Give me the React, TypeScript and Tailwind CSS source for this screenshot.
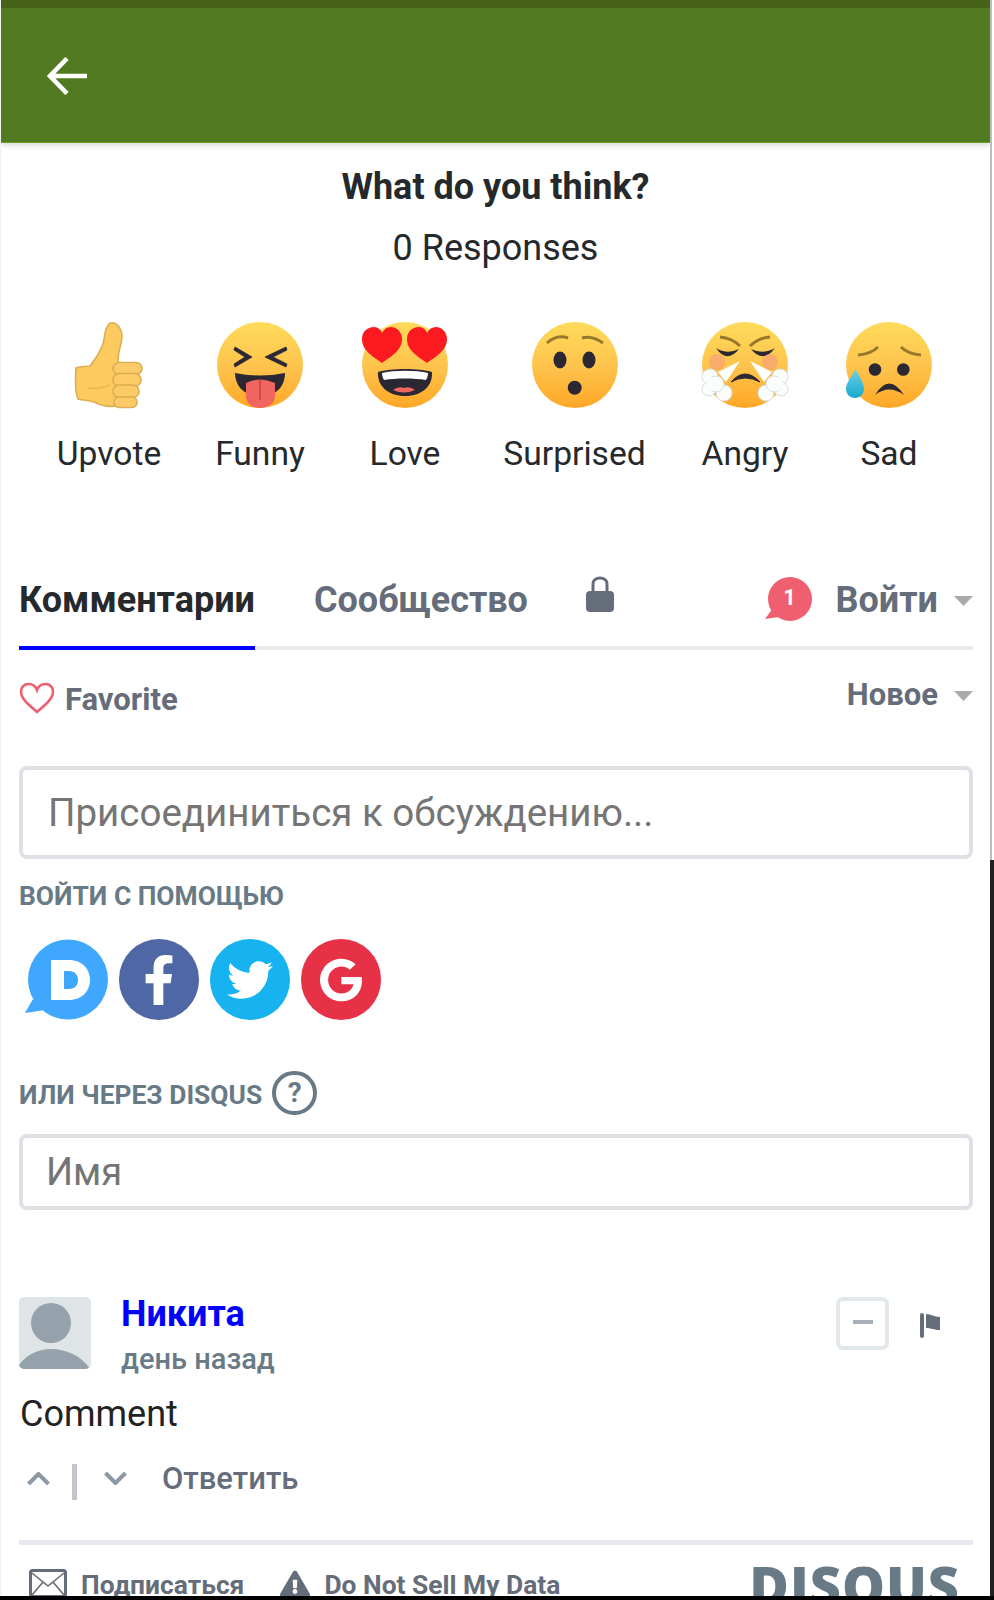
import React from "react";
import { FaFacebookF, FaTwitter, FaGoogle, FaExclamationTriangle } from "react-icons/fa";

const Defs = () => (
  <svg width="0" height="0" className="absolute">
    <defs>
      <linearGradient id="face" x1="0" y1="0" x2="0" y2="1">
        <stop offset="0" stopColor="#ffdb5a" />
        <stop offset="0.55" stopColor="#fec24b" />
        <stop offset="1" stopColor="#ffa726" />
      </linearGradient>
      <linearGradient id="tear" x1="0" y1="0" x2="0" y2="1">
        <stop offset="0" stopColor="#6fd0ea" />
        <stop offset="1" stopColor="#16a8cd" />
      </linearGradient>
    </defs>
  </svg>
);

const Face = ({ children }: { children?: React.ReactNode }) => (
  <svg width="86" height="86" viewBox="0 0 86 86" className="overflow-visible block">
    <circle cx="43" cy="43" r="43" fill="url(#face)" />
    {children}
  </svg>
);

const Thumb = () => (
  <svg width="86" height="86" viewBox="0 0 86 86" className="overflow-visible block">
    <path
      d="M46 0.8C52 0.8 56 8 56 14C56 22 52 28 52 39L50 84C44 85 36 84 28 80C22 78 15 78 12 77C9 70 9 60 10 46C14 44 20 45 24 44C30 36 36 28 38 18C39 8 41 0.8 46 0.8Z"
      fill="#fdca60"
      stroke="#dcae53"
      strokeWidth="1.6"
    />
    <path d="M22 66C30 67 36 66 44 63" fill="none" stroke="#dcae53" strokeWidth="1" />
    <rect x="47" y="40.5" width="29" height="12" rx="6" fill="#fccb68" stroke="#dcae53" strokeWidth="1.6" />
    <rect x="47" y="51.5" width="28" height="12.5" rx="6" fill="#fccb68" stroke="#dcae53" strokeWidth="1.6" />
    <rect x="47" y="63" width="26" height="12.5" rx="6" fill="#fccb68" stroke="#dcae53" strokeWidth="1.6" />
    <rect x="48" y="75" width="23" height="10.5" rx="5" fill="#fccb68" stroke="#dcae53" strokeWidth="1.6" />
  </svg>
);

const Funny = () => (
  <Face>
    <path d="M18 25L35 35L18 45L17 42L28 35L17 28Z" fill="#2b2733" stroke="#2b2733" strokeWidth="0.8" />
    <path d="M69 25L48 35L69 45L70 42L56 35L70 28Z" fill="#2b2733" stroke="#2b2733" strokeWidth="0.8" />
    <path d="M18 51Q43 56 68 51C68 64 60 74 43 74C27 74 18 64 18 51Z" fill="#2b2733" />
    <path d="M29 61Q43 54 58 61L58 74C58 82 50 86 43 86C36 86 29 82 29 74Z" fill="#f0655f" />
    <path d="M43 58V78" stroke="#c5433f" strokeWidth="1.5" />
  </Face>
);

const Heart = ({ x }: { x: number }) => (
  <path
    transform={`translate(${x} 5)`}
    d="M20 36C12 30 0 24 0 12C0 4 6 0 12 0C16 0 19 3 20 6C22 2 25 0 29 0C35 0 40 5 40 12C40 24 28 30 20 36Z"
    fill="#fb1a1f"
  />
);

const Love = () => (
  <Face>
    <path d="M16 50C28 46 58 46 70 50C71 64 60 74 43 74C26 74 15 64 16 50Z" fill="#2b2733" />
    <path d="M20 51C32 48 54 48 66 51C66 54 65 56 64 58C52 56 34 56 22 58C21 56 20 54 20 51Z" fill="#ffffff" />
    <path d="M31 68Q36 64 42 66Q48 64 53 68Q42 73 31 68Z" fill="#f0695f" />
    <Heart x={0} />
    <Heart x={45} />
  </Face>
);

const Surprised = () => (
  <Face>
    <path d="M15 21Q25 12 36 16" fill="none" stroke="#98782a" strokeWidth="3" />
    <path d="M50 16Q60 13 71 21" fill="none" stroke="#98782a" strokeWidth="3" />
    <ellipse cx="28" cy="38" rx="6.5" ry="8.5" fill="#2b2733" />
    <ellipse cx="57" cy="38" rx="6.5" ry="8.5" fill="#2b2733" />
    <circle cx="42.7" cy="65.7" r="7" fill="#2b2733" />
  </Face>
);

const Angry = () => (
  <Face>
    <path d="M18 15Q30 16 38 24" fill="none" stroke="#98782a" strokeWidth="3" />
    <path d="M68 15Q56 16 48 24" fill="none" stroke="#98782a" strokeWidth="3" />
    <path d="M14 26Q25 33 37 27Q25 42 14 26Z" fill="#2b2733" />
    <path d="M49 27Q61 33 73 26Q61 42 49 27Z" fill="#2b2733" />
    <circle cx="15" cy="40" r="8" fill="#f59a80" opacity="0.6" />
    <circle cx="68" cy="40" r="8" fill="#f59a80" opacity="0.6" />
    <path d="M38 39L16 50L24 60Z" fill="#ffffff" />
    <path d="M48 39L70 50L62 60Z" fill="#ffffff" />
    <path d="M29 60Q43 44 58 60Q43 52 29 60Z" fill="#2b2733" stroke="#2b2733" strokeWidth="1" />
    {[
      [8, 55, 8],
      [7, 67, 7],
      [22, 71, 8],
      [14, 62, 8],
      [78, 55, 8],
      [79, 67, 7],
      [64, 71, 8],
      [72, 62, 8],
    ].map(([cx, cy, r], i) => (
      <circle key={i} cx={cx} cy={cy} r={r} fill="#fbfdfd" stroke="#d4dfe2" strokeWidth="1" />
    ))}
    <circle cx="12" cy="62" r="7" fill="#fbfdfd" />
    <circle cx="74" cy="62" r="7" fill="#fbfdfd" />
  </Face>
);

const Sad = () => (
  <Face>
    <path d="M12 33Q25 32 32 25" fill="none" stroke="#98782a" strokeWidth="3" />
    <path d="M55 25Q62 32 75 33" fill="none" stroke="#98782a" strokeWidth="3" />
    <circle cx="29" cy="47.5" r="6.3" fill="#2b2733" />
    <circle cx="57.3" cy="47.5" r="6.3" fill="#2b2733" />
    <path d="M29 73Q43 50 58 73Q43 62 29 73Z" fill="#2b2733" />
    <path d="M9.5 47C12 53 18 60 18 67C18 72 14 76 9 76C4 76 0 72 0 67C0 60 7 53 9.5 47Z" fill="url(#tear)" />
  </Face>
);

const reactions: { label: string; icon: React.ReactNode; w: string }[] = [
  { label: "Upvote", icon: <Thumb />, w: "w-[180px]" },
  { label: "Funny", icon: <Funny />, w: "w-[122px]" },
  { label: "Love", icon: <Love />, w: "w-[168px]" },
  { label: "Surprised", icon: <Surprised />, w: "w-[171px]" },
  { label: "Angry", icon: <Angry />, w: "w-[170px]" },
  { label: "Sad", icon: <Sad />, w: "w-[118px]" },
];

const Caret = () => (
  <svg width="19" height="10" viewBox="0 0 19 10" className="block">
    <path d="M0 0H19L9.5 10Z" fill="#aaaaaa" />
  </svg>
);

export default function App() {
  return (
    <div className="relative w-[994px] h-[1600px] overflow-hidden bg-white font-[Roboto,sans-serif]">
      <Defs />
      <div className="w-[990px] h-[1600px] overflow-hidden border-l border-[#f2f2f2]">
        {/* app bar */}
        <div className="h-[143px] bg-[#527a20] border-b border-[#6aa025] shadow-[0_2px_6px_rgba(0,0,0,0.18)]">
          <div className="h-[8px] bg-[#466219]" />
          <div className="pl-[46px] pt-[49px]">
            <svg width="40" height="38" viewBox="0 0 40 38" className="block">
              <path d="M40 19H4M20 1.5L3 19L20 36.5" fill="none" stroke="#ffffff" strokeWidth="4.6" />
            </svg>
          </div>
        </div>

        {/* reactions */}
        <div className="mt-[24px] h-[40px] leading-[40px] text-center text-[36px] font-bold text-[#25292c]">
          What do you think?
        </div>
        <div className="mt-[21px] h-[40px] leading-[40px] text-center text-[36px] text-[#25292c]">
          0 Responses
        </div>
        <div className="mt-[54px] pl-[18px] flex">
          {reactions.map((r) => (
            <div key={r.label} className={`flex flex-col items-center shrink-0 ${r.w}`}>
              {r.icon}
              <div className="mt-[26px] h-[40px] leading-[40px] text-[33.6px] text-[#25292c] whitespace-nowrap">
                {r.label}
              </div>
            </div>
          ))}
        </div>

        <div className="pl-[18px] pr-[17px]">
          {/* tabs */}
          <div className="mt-[100px] h-[76px] flex items-start border-b-4 border-[#e7e9ee]">
            <div className="h-[76px] border-b-4 border-[#0000ff] leading-[52px] text-[36px] font-bold text-[#25292c] whitespace-nowrap">
              Комментарии
            </div>
            <div className="ml-[59px] leading-[52px] text-[36px] font-bold text-[#656c7a] whitespace-nowrap">
              Сообщество
            </div>
            <svg width="28" height="37" viewBox="0 0 28 37" className="block ml-[58px] mt-[1px]">
              <path d="M7 17V9C7 1 21 1 21 9V17" fill="none" stroke="#656c7a" strokeWidth="3" />
              <rect x="0" y="16" width="28" height="21" rx="4" fill="#656c7a" />
            </svg>
            <div className="ml-auto relative w-[47px] h-[46px] mt-[2px]">
              <svg width="47" height="46" viewBox="0 0 47 46" className="block">
                <circle cx="25" cy="23" r="22" fill="#f05f70" />
                <path d="M8 32L0 43L14 41Z" fill="#f05f70" />
              </svg>
              <span className="absolute left-[3px] top-0 w-[44px] text-center leading-[44px] text-[22px] font-bold text-white">1</span>
            </div>
            <div className="ml-[24px] leading-[52px] text-[36px] font-bold text-[#656c7a]">Войти</div>
            <div className="ml-[16px] mt-[22px]">
              <Caret />
            </div>
          </div>

          {/* favourite + sort */}
          <div className="h-[116px] flex justify-between items-start">
            <div className="mt-[28px] h-[40px] flex items-center">
              <svg width="36" height="32" viewBox="0 0 36 32" className="block">
                <path
                  d="M18 30C10 23 2 17 2 9.5C2 5 5.5 2 9.5 2C13 2 16.5 4 18 8C19.5 4 23 2 26.5 2C30.5 2 34 5 34 9.5C34 17 26 23 18 30Z"
                  fill="none"
                  stroke="#f05f70"
                  strokeWidth="2.6"
                />
              </svg>
              <span className="ml-[10px] mt-[4px] text-[31px] font-bold text-[#656c7a]">Favorite</span>
            </div>
            <div className="mt-[25px] h-[40px] flex items-center">
              <span className="text-[31px] font-bold text-[#656c7a]">Новое</span>
              <span className="ml-[16px] mt-[2px]">
                <Caret />
              </span>
            </div>
          </div>

          {/* compose */}
          <div className="h-[93px] rounded-[8px] border-4 border-[#dde1e6] flex items-center pl-[25px] text-[38.5px] text-[#757575] whitespace-nowrap">
            Присоединиться к обсуждению...
          </div>
          <div className="mt-[22px] h-[30px] leading-[30px] text-[26.4px] font-bold text-[#687a86] whitespace-nowrap">
            ВОЙТИ С ПОМОЩЬЮ
          </div>
          <div className="mt-[28px] h-[81px] flex gap-[11px] pl-[6px]">
            <svg width="83" height="81" viewBox="0 0 83 81" className="block shrink-0">
              <circle cx="43" cy="40.5" r="40" fill="#40a7ff" />
              <path d="M8 60L0 74L20 71Z" fill="#40a7ff" />
              <path
                fillRule="evenodd"
                d="M26 21H44C57 21 65 30 65 41C65 52 57 61 44 61H26ZM39 32V50H44C50 50 53 46 53 41C53 36 50 32 44 32Z"
                fill="#ffffff"
              />
            </svg>
            <div className="w-[80px] h-[81px] rounded-full bg-[#4f67a5] flex items-center justify-center shrink-0">
              <FaFacebookF size={50} color="#ffffff" />
            </div>
            <div className="w-[80px] h-[81px] rounded-full bg-[#17b2f0] flex items-center justify-center shrink-0">
              <FaTwitter size={46} color="#ffffff" />
            </div>
            <div className="w-[80px] h-[81px] rounded-full bg-[#e63146] flex items-center justify-center shrink-0">
              <FaGoogle size={44} color="#ffffff" />
            </div>
          </div>
          <div className="mt-[51px] h-[44px] flex items-center">
            <span className="mt-[6px] text-[26.4px] font-bold text-[#687a86] whitespace-nowrap">ИЛИ ЧЕРЕЗ DISQUS</span>
            <span className="ml-[10px] w-[45px] h-[44px] rounded-full border-4 border-[#687a86] flex items-center justify-center text-[28px] font-bold text-[#687a86]">
              ?
            </span>
          </div>
          <div className="mt-[19px] h-[76px] rounded-[8px] border-4 border-[#dde1e6] flex items-center pl-[23px] text-[38px] text-[#757575]">
            Имя
          </div>

          {/* comment */}
          <div className="mt-[87px] h-[72px] flex items-start">
            <svg width="72" height="72" viewBox="0 0 72 72" className="block shrink-0 rounded-[5px]">
              <rect width="72" height="72" fill="#dfe4e7" />
              <circle cx="32" cy="26" r="20" fill="#96a2ab" />
              <path d="M0 72V68C8 57 20 52 32 52C46 52 62 58 71 72Z" fill="#96a2ab" />
            </svg>
            <div className="ml-[30px]">
              <div className="-mt-[3px] h-[40px] leading-[40px] text-[36px] font-bold text-[#0000ff]">Никита</div>
              <div className="mt-[10px] h-[30px] leading-[30px] text-[29px] font-medium text-[#687a86] whitespace-nowrap">
                день назад
              </div>
            </div>
            <div className="ml-auto w-[53px] h-[53px] rounded-[7px] border-4 border-[#e2e7ea] flex items-center justify-center">
              <div className="w-[20px] h-[4px] -mt-[4px] bg-[#a8afb9]" />
            </div>
            <svg width="20" height="25" viewBox="0 0 20 25" className="block ml-[31px] mr-[33px] mt-[16px]">
              <rect x="0" y="0" width="4" height="25" rx="2" fill="#656c7a" />
              <path d="M6 1C11 1 14 4 20 4V17C14 17 11 15 6 15Z" fill="#656c7a" />
            </svg>
          </div>
          <div className="mt-[25px] h-[40px] leading-[40px] text-[36px] text-[#222222] pl-[1px]">Comment</div>
          <div className="mt-[30px] h-[36px] flex items-center">
            <svg width="23" height="13" viewBox="0 0 23 13" className="block ml-[8px] -mt-[7px]">
              <path d="M1.5 12L11.5 2L21.5 12" fill="none" stroke="#8c98a3" strokeWidth="4" />
            </svg>
            <div className="ml-[22px] w-[5px] h-[36px] bg-[#c2c6cc]" />
            <svg width="23" height="13" viewBox="0 0 23 13" className="block ml-[27px] -mt-[7px]">
              <path d="M1.5 1L11.5 11L21.5 1" fill="none" stroke="#8c98a3" strokeWidth="4" />
            </svg>
            <span className="ml-[35px] -mt-[6px] text-[31px] font-medium text-[#656c7a] whitespace-nowrap">Ответить</span>
          </div>
          <div className="mt-[40px] h-[5px] bg-[#e7e9ee]" />

          {/* footer */}
          <div className="mt-[24px] h-[34px] flex items-start text-[#656c7a] font-bold text-[26.4px]">
            <svg width="38" height="29" viewBox="0 0 38 29" className="block ml-[10px] shrink-0">
              <rect x="1.5" y="1.5" width="35" height="26" rx="2" fill="none" stroke="#656c7a" strokeWidth="3" />
              <path d="M3 4L19 17L35 4M3 26L14 13M35 26L24 13" fill="none" stroke="#656c7a" strokeWidth="1.6" />
            </svg>
            <span className="ml-[14px] leading-[32px] whitespace-nowrap">Подписаться</span>
            <span className="ml-[36px] shrink-0">
              <FaExclamationTriangle size={30} color="#656c7a" />
            </span>
            <span className="ml-[14px] leading-[32px] whitespace-nowrap">Do Not Sell My Data</span>
            <span className="ml-auto mr-[13px] -mt-[15px] leading-[62px] text-[54px] tracking-[1px] font-['Open_Sans',sans-serif] font-extrabold text-[#687a86] whitespace-nowrap">
              DISQUS
            </span>
          </div>
        </div>
      </div>

      {/* screenshot frame edges */}
      <div className="absolute left-[990px] top-0 w-[2px] h-[860px] bg-[#bdbdbd]" />
      <div className="absolute left-[990px] top-[860px] w-[4px] h-[740px] bg-[#222222]" />
      <div className="absolute left-0 top-[1596px] w-[994px] h-[4px] bg-black" />
    </div>
  );
}
